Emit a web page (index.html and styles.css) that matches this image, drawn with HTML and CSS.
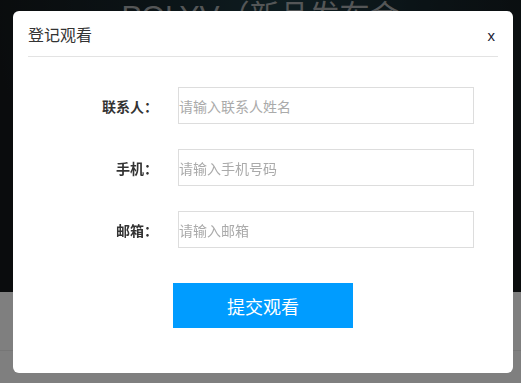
FILE: index.html
```html
<!DOCTYPE html>
<html lang="zh-CN">
<head>
  <meta charset="UTF-8" />
  <meta name="viewport" content="width=device-width, initial-scale=1" />
  <title>登记观看</title>
  <link rel="stylesheet" href="styles.css">
</head>
<body>

  <!-- PAGE BEHIND THE DIALOG -->
  <header class="banner">
    <h1>POLYV（新品发布会</h1>
  </header>
  <section class="below">
    <div class="below-bar"></div>
  </section>

  <!-- MASK + DIALOG -->
  <div class="mask"></div>
  <div class="dialog" role="dialog" aria-labelledby="dialog-title">
    <div class="dialog-head">
      <h2 id="dialog-title">登记观看</h2>
      <a href="#" class="close" aria-label="关闭">x</a>
    </div>
    <form class="dialog-form">
      <div class="row">
        <label for="f-name">联系人：</label>
        <input id="f-name" type="text" placeholder="请输入联系人姓名" />
      </div>
      <div class="row">
        <label for="f-phone">手机：</label>
        <input id="f-phone" type="text" placeholder="请输入手机号码" />
      </div>
      <div class="row">
        <label for="f-mail">邮箱：</label>
        <input id="f-mail" type="text" placeholder="请输入邮箱" />
      </div>
      <div class="actions">
        <button type="button" class="btn">提交观看</button>
      </div>
    </form>
  </div>

</body>
</html>
```

FILE: styles.css
```css
/* Reset & basics */
*, *::before, *::after {
  box-sizing: border-box;
}
body, h1, h2, p {
  margin: 0;
  padding: 0;
}
body {
  font-family: "Liberation Sans", "Noto Sans CJK SC", sans-serif;
  background: #fff;
  color: #333;
  overflow: hidden;
}
a {
  text-decoration: none;
  color: inherit;
}

/* PAGE BEHIND */
.banner {
  height: 292px;
  background: radial-gradient(ellipse at 55% 0%, #1d3a42 0%, #16262c 35%, #15181a 75%);
  text-align: center;
}
.banner h1 {
  font-size: 30px;
  line-height: 30px;
  font-weight: 400;
  color: #a9adaf;
  padding-top: 1px;
}
.below {
  height: 91px;
  background: #fff;
  padding-top: 58px;
}
.below-bar {
  height: 1px;
  background: #ececec;
}

/* MASK */
.mask {
  position: fixed;
  inset: 0;
  background: rgba(0, 0, 0, 0.5);
}

/* DIALOG */
.dialog {
  position: fixed;
  top: 11px;
  left: 13px;
  width: 500px;
  background: #fff;
  border-radius: 6px;
  padding-bottom: 45px;
}
.dialog-head {
  margin: 0 15px;
  padding-top: 5px;
  height: 46px;
  border-bottom: 1px solid #e3e3e3;
  display: flex;
  justify-content: space-between;
  align-items: flex-start;
}
.dialog-head h2 {
  font-size: 16px;
  line-height: 40px;
  font-weight: 400;
  color: #333;
}
.close {
  font-size: 15px;
  line-height: 40px;
  color: #223;
  padding-right: 3px;
}

/* FORM */
.dialog-form {
  padding-top: 30px;
  display: flex;
  flex-direction: column;
  gap: 25px;
}
.row {
  display: flex;
  align-items: center;
  gap: 20px;
}
.row label {
  width: 145px;
  text-align: right;
  font-size: 14px;
  font-weight: 700;
  color: #333;
}
.row input {
  width: 296px;
  height: 37px;
  border: 1px solid #ddd;
  padding: 0;
  font-family: "Noto Sans CJK SC", sans-serif;
  font-size: 14px;
  color: #333;
  outline: none;
}
.row input::placeholder {
  color: #aaa;
}
.actions {
  display: flex;
  justify-content: center;
  padding-top: 10px;
}
.btn {
  width: 180px;
  height: 45px;
  border: none;
  background: #009cff;
  color: #fff;
  font-family: "Noto Sans CJK SC", sans-serif;
  font-size: 18px;
  cursor: pointer;
}
```
